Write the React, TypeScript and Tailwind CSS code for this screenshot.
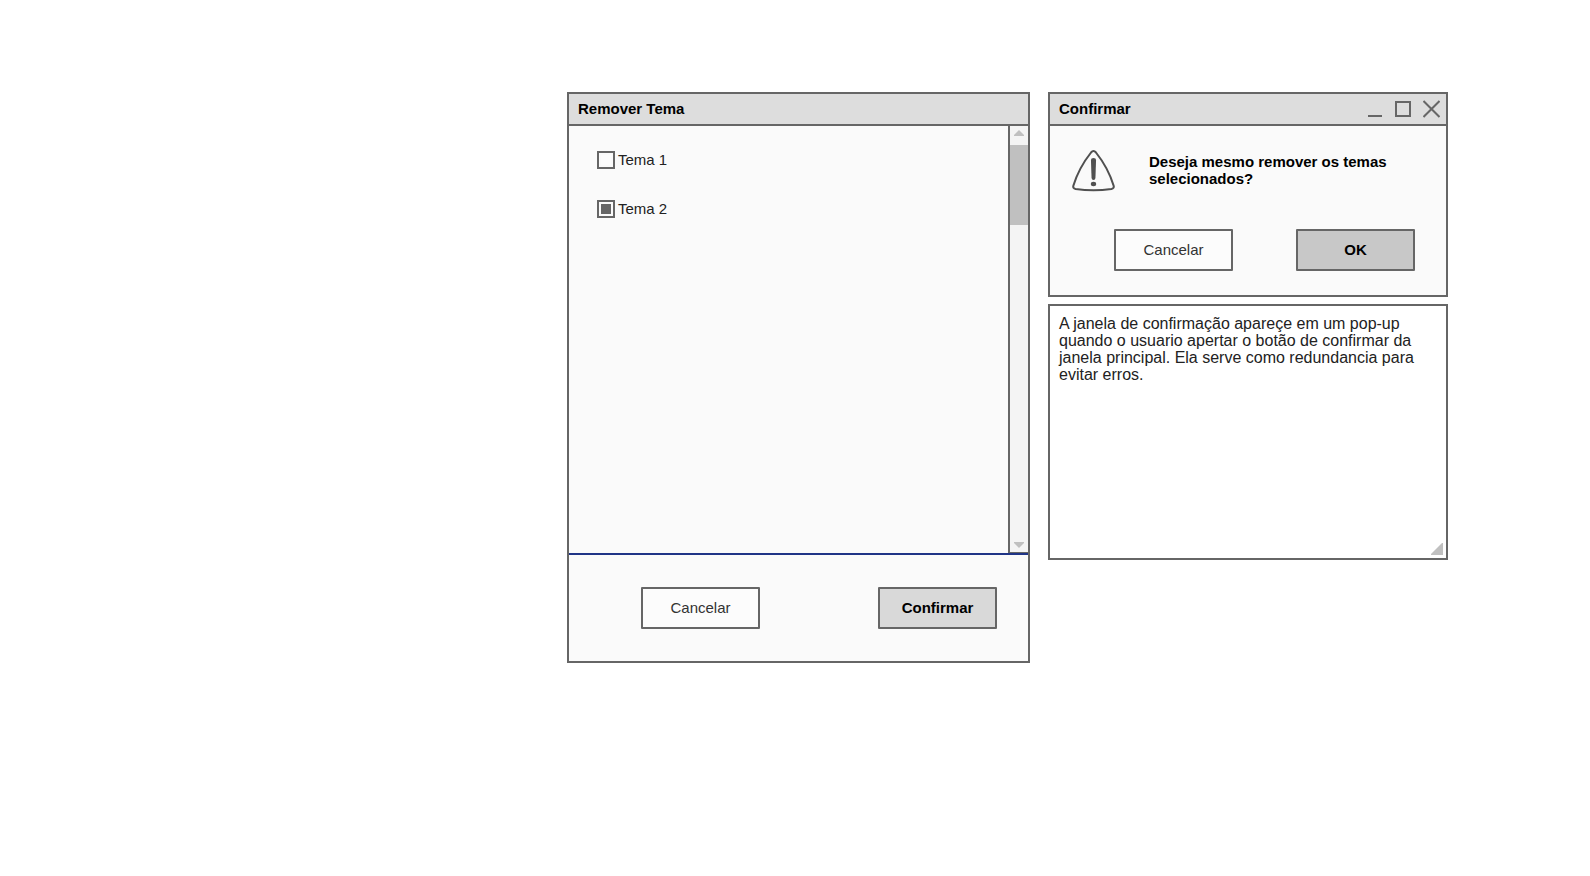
import { useState } from "react";
import type { ReactNode } from "react";

function TitleBar({ title, children }: { title: string; children?: ReactNode }) {
  return (
    <header className="flex h-8 shrink-0 items-center justify-between border-b-2 border-[#666666] bg-[#dddddd] pr-[6px] pl-[9px]">
      <h2 className="text-[15px] leading-[18px] font-bold text-black">{title}</h2>
      {children}
    </header>
  );
}

function DialogButton({ label, variant }: { label: string; variant: "plain" | "primary" | "strong" }) {
  const styles = {
    plain: "bg-[#fcfcfc] text-[#333333]",
    primary: "bg-[#d9d9d9] font-bold text-black",
    strong: "bg-[#c8c8c8] font-bold text-black",
  };
  return (
    <button
      type="button"
      className={`h-[42px] w-[119px] rounded-[1px] border-2 border-[#666666] text-[15px] leading-[18px] ${styles[variant]}`}
    >
      {label}
    </button>
  );
}

function ThemeOption({ label, checked, onChange }: { label: string; checked: boolean; onChange: () => void }) {
  return (
    <label className="flex items-center gap-[3px] text-[15px] leading-[18px] text-[#222222]">
      <input
        type="checkbox"
        checked={checked}
        onChange={onChange}
        className="size-[18px] appearance-none border-2 border-[#666666] bg-[#fcfcfc] bg-clip-content p-[2px] checked:bg-[#666666]"
      />
      {label}
    </label>
  );
}

function ScrollBar() {
  return (
    <div className="flex w-5 shrink-0 flex-col border-b border-l-2 border-[#666666] bg-[#f4f4f4]">
      <button type="button" aria-label="Rolar para cima" className="flex h-[19px] items-center justify-center pb-[5px]">
        <svg width="10" height="6" viewBox="0 0 10 6" fill="#c0c0c0">
          <path d="M5 0 10 5V6H0V5Z" />
        </svg>
      </button>
      <div className="h-20 bg-[#c0c0c0]" />
      <div className="flex-1" />
      <button type="button" aria-label="Rolar para baixo" className="flex h-3 items-center justify-center pb-[2px]">
        <svg width="10" height="6" viewBox="0 0 10 6" fill="#c0c0c0">
          <path d="M0 0H10V1L5 6 0 1Z" />
        </svg>
      </button>
    </div>
  );
}

function WarningIcon() {
  return (
    <svg width="43" height="42" viewBox="0 0 42 42" preserveAspectRatio="none" className="shrink-0">
      <path
        d="M18.6 2.5Q21 -.3 23.4 2.5C30 11 37 23.500 40.600 35.500Q41.500 38.300 38.500 38.900Q21 41.500 3.500 38.900Q.5 38.300 1.400 35.500C5 23.500 12 11 18.600 2.500Z"
        fill="none"
        stroke="#505050"
        strokeWidth="2"
      />
      <path d="M18.500 10Q18.500 8 21 8T23.500 10L22.900 28Q22.700 30 21 30T19.100 28Z" fill="#505050" />
      <ellipse cx="21" cy="34" rx="2.600" ry="2.200" fill="#505050" />
    </svg>
  );
}

function WindowControls() {
  return (
    <div className="flex items-center gap-3">
      <button type="button" aria-label="Minimizar">
        <svg className="block" width="15" height="18" viewBox="0 0 15 18">
          <path d="M0 16H14" stroke="#666" strokeWidth="2" />
        </svg>
      </button>
      <button type="button" aria-label="Maximizar">
        <svg className="block" width="16" height="18" viewBox="0 0 16 18">
          <path d="M1 2H15V16H1Z" fill="none" stroke="#666" strokeWidth="2" />
        </svg>
      </button>
      <button type="button" aria-label="Fechar">
        <svg className="block" width="17" height="18" viewBox="0 0 17 18">
          <path d="M.5 1 16.500 17M16.500 1 .5 17" stroke="#666" strokeWidth="2" />
        </svg>
      </button>
    </div>
  );
}

export default function App() {
  const [selected, setSelected] = useState([false, true]);
  const [note, setNote] = useState(
    "A janela de confirmação apareçe em um pop-up quando o usuario apertar o botão de confirmar da janela principal. Ela serve como redundancia para evitar erros."
  );
  const toggle = (index: number) => setSelected(selected.map((value, i) => (i === index ? !value : value)));

  return (
    <main className="flex min-h-screen items-start justify-end gap-[18px] bg-white pt-[92px] pr-[142px] font-['Liberation_Sans',Arial,sans-serif]">
      <section className="flex w-full max-w-[463px] flex-col border-2 border-[#666666] bg-[#fafafa]">
        <TitleBar title="Remover Tema" />
        <div className="flex min-h-[429px] border-b-2 border-[#1f3486]">
          <div className="flex flex-1 flex-col gap-[31px] px-7 py-[25px]">
            {["Tema 1", "Tema 2"].map((label, i) => (
              <ThemeOption key={label} label={label} checked={selected[i]} onChange={() => toggle(i)} />
            ))}
          </div>
          <ScrollBar />
        </div>
        <footer className="flex justify-between pt-8 pr-[31px] pb-8 pl-[72px]">
          <DialogButton label="Cancelar" variant="plain" />
          <DialogButton label="Confirmar" variant="primary" />
        </footer>
      </section>

      <div className="flex w-full max-w-[400px] flex-col gap-[7px]">
        <section className="border-2 border-[#666666] bg-[#fafafa]">
          <TitleBar title="Confirmar">
            <WindowControls />
          </TitleBar>
          <div className="flex items-start gap-[34px] pt-6 pr-8 pl-[22px]">
            <WarningIcon />
            <p className="pt-[3px] text-[15px] leading-[17px] font-bold text-black">
              Deseja mesmo remover os temas selecionados?
            </p>
          </div>
          <div className="flex justify-between pt-[37px] pr-[31px] pb-6 pl-16">
            <DialogButton label="Cancelar" variant="plain" />
            <DialogButton label="OK" variant="strong" />
          </div>
        </section>
        <div className="relative flex">
          <textarea
            aria-label="Anotação"
            value={note}
            onChange={(event) => setNote(event.target.value)}
            className="h-64 w-full resize-none border-2 border-[#666666] bg-white px-[9px] py-[9px] text-[16px] leading-[17px] text-[#222222]"
          />
          <svg className="absolute right-[5px] bottom-[5px]" width="12" height="12" viewBox="0 0 12 12">
            <path d="M0 12V11L11 0H12V12Z" fill="#c0c0c0" />
          </svg>
        </div>
      </div>
    </main>
  );
}
